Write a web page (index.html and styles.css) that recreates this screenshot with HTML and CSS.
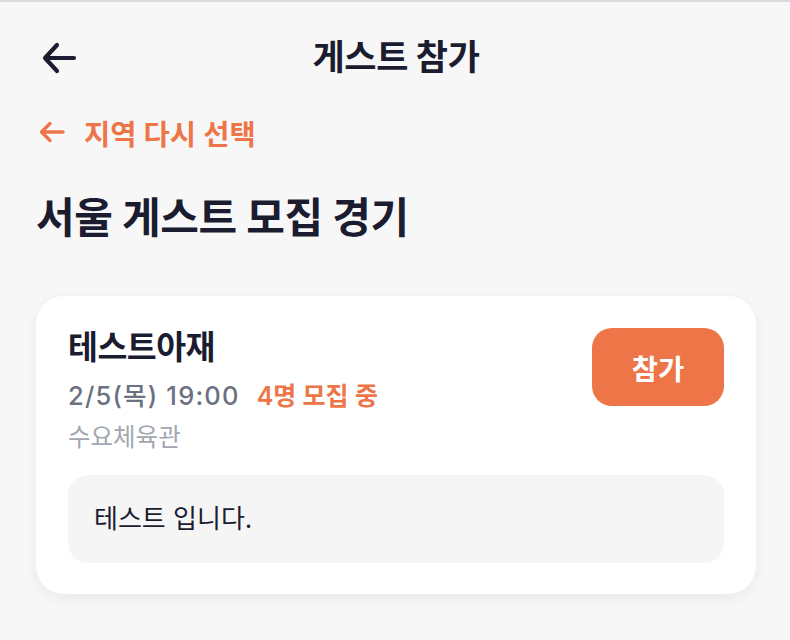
FILE: index.html
```html
<!DOCTYPE html>
<html lang="ko">
<head>
<meta charset="utf-8">
<link rel="stylesheet" href="styles.css">
</head>
<body>
<div class="page">
  <header class="topbar">
    <button class="back" aria-label="뒤로">
      <svg width="38" height="34" viewBox="0 0 38 34"><path d="M34 17H5M17 4L5 17l12 13" fill="none" stroke="#1b1c30" stroke-width="4.2" stroke-linecap="round" stroke-linejoin="round"/></svg>
    </button>
    <h1 class="title">게스트 참가</h1>
  </header>
  <a class="reselect">
    <svg width="28" height="24" viewBox="0 0 28 24"><path d="M25 12H4M12 3.5L3.5 12l8.5 8.5" fill="none" stroke="#ee7548" stroke-width="3.4" stroke-linecap="round" stroke-linejoin="round"/></svg>
    <span>지역 다시 선택</span>
  </a>
  <h2 class="heading">서울 게스트 모집 경기</h2>
  <section class="card">
    <div class="card-top">
      <div class="info">
        <div class="name">테스트아재</div>
        <div class="meta"><span class="when">2/5(목) 19:00</span><span class="count">4명 모집 중</span></div>
        <div class="venue">수요체육관</div>
      </div>
      <button class="join">참가</button>
    </div>
    <div class="desc">테스트 입니다.</div>
  </section>
</div>
</body>
</html>
```
FILE: styles.css
```css
* { box-sizing: border-box; }
html, body { margin: 0; padding: 0; }
body {
  background: #f7f7f7;
  font-family: "Inter", "Noto Sans CJK KR", sans-serif;
  color: #1b1c30;
  border-top: 2px solid #dadade;
  width: 790px;
  height: 640px;
  overflow: hidden;
}
.page { padding: 0 34px 0 36px; }
.topbar {
  position: relative;
  height: 114px;
  display: flex;
  align-items: center;
  justify-content: center;
}
.back {
  position: absolute;
  left: 4px;
  top: 39px;
  border: 0;
  background: none;
  padding: 0;
  display: flex;
}
.title {
  margin: -10px 0 0 0;
  font-size: 35px;
  font-weight: 700;
  letter-spacing: -0.4px;
}
.reselect {
  display: flex;
  align-items: center;
  gap: 18px;
  color: #ee7548;
  font-size: 28.5px;
  font-weight: 600;
  padding-left: 2px;
  height: 32px;
}
.heading {
  margin: 45px 0 0 0;
  font-size: 42px;
  font-weight: 700;
  letter-spacing: -0.4px;
  line-height: 50px;
}
.card {
  margin-top: 53px;
  background: #fff;
  border-radius: 28px;
  padding: 32px 32px 31px 32px;
  box-shadow: 0 4px 14px rgba(0,0,0,0.06);
}
.card-top {
  display: flex;
  justify-content: space-between;
  align-items: flex-start;
}
.name {
  font-size: 32.5px;
  font-weight: 700;
  line-height: 40px;
  letter-spacing: -0.5px;
}
.meta {
  margin-top: 12px;
  font-size: 25.5px;
  font-weight: 500;
  line-height: 32px;
  display: flex;
  align-items: baseline;
  gap: 17px;
}
.when { color: #6b7180; letter-spacing: 1.2px; }
.count { color: #ee7548; font-weight: 600; font-size: 25px; }
.venue {
  margin-top: 10px;
  font-size: 24.5px;
  color: #a3a7b0;
  line-height: 30px;
}
.join {
  border: 0;
  background: #ee7548;
  color: #fff;
  font-family: inherit;
  font-size: 28.5px;
  font-weight: 700;
  width: 132px;
  height: 78px;
  border-radius: 20px;
}
.desc {
  margin-top: 23px;
  background: #f5f5f6;
  border-radius: 20px;
  padding: 26px 26px;
  font-size: 26px;
  line-height: 36px;
}
```
